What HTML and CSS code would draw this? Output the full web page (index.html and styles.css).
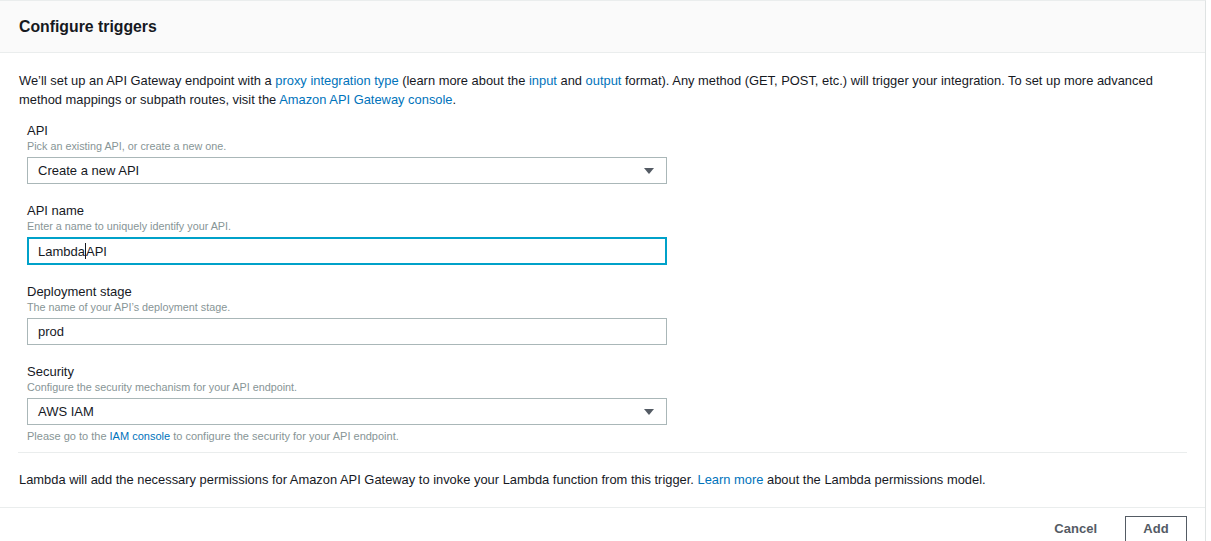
FILE: index.html
```html
<!DOCTYPE html>
<html lang="en">
<head>
<meta charset="utf-8">
<title>Configure triggers</title>
<link rel="stylesheet" href="styles.css">
</head>
<body>
<div class="card">
  <div class="card-header"><h2>Configure triggers</h2></div>
  <div class="card-body">
    <p class="intro">We’ll set up an API Gateway endpoint with a <a href="#">proxy integration type</a> (learn more about the <a href="#">input</a> and <a href="#">output</a> format). Any method (GET, POST, etc.) will trigger your integration. To set up more advanced method mappings or subpath routes, visit the <a href="#">Amazon API Gateway console</a>.</p>
    <div class="fields">
      <div class="field">
        <div class="label">API</div>
        <div class="desc">Pick an existing API, or create a new one.</div>
        <div class="control select"><span>Create a new API</span><span class="caret"></span></div>
      </div>
      <div class="field">
        <div class="label">API name</div>
        <div class="desc">Enter a name to uniquely identify your API.</div>
        <div class="control focus"><span>Lambda</span><span class="cursor"></span><span>API</span></div>
      </div>
      <div class="field">
        <div class="label">Deployment stage</div>
        <div class="desc">The name of your API’s deployment stage.</div>
        <div class="control"><span>prod</span></div>
      </div>
      <div class="field">
        <div class="label">Security</div>
        <div class="desc">Configure the security mechanism for your API endpoint.</div>
        <div class="control select"><span>AWS IAM</span><span class="caret"></span></div>
        <div class="help">Please go to the <a href="#">IAM console</a> to configure the security for your API endpoint.</div>
      </div>
    </div>
    <div class="perm">Lambda will add the necessary permissions for Amazon API Gateway to invoke your Lambda function from this trigger. <a href="#">Learn more</a> about the Lambda permissions model.</div>
  </div>
  <div class="card-footer">
    <button class="btn link">Cancel</button>
    <button class="btn outline">Add</button>
  </div>
</div>
</body>
</html>
```
FILE: styles.css
```css
* { box-sizing: border-box; }
html, body { margin: 0; padding: 0; }
body {
  background: #fff;
  font-family: "Liberation Sans", Arial, sans-serif;
  font-size: 13px;
  color: #16191f;
  overflow: hidden;
}
a { color: #0073bb; text-decoration: none; }
.card {
  width: 1206px;
  border-top: 1px solid #eaeded;
  border-right: 1px solid #dfe3e3;
  background: #fff;
}
.card-header {
  height: 52px;
  background: #fafafa;
  border-bottom: 1px solid #eaeded;
  display: flex;
  align-items: center;
  padding: 0 19px;
}
.card-header h2 {
  margin: 0;
  font-size: 15.8px;
  font-weight: bold;
  color: #16191f;
}
.card-body {
  padding: 18px 18px 0 18px;
}
.intro {
  margin: 0 0 0 1px;
  line-height: 19px;
  font-size: 12.9px;
}
.fields {
  padding: 14px 0 9px 9px;
  border-bottom: 1px solid #eaeded;
  display: flex;
  flex-direction: column;
  gap: 19px;
}
.label {
  font-size: 13px;
  line-height: 16px;
  color: #16191f;
}
.desc {
  font-size: 10.8px;
  line-height: 14px;
  color: #879596;
  margin-bottom: 4px;
}
.control {
  width: 640px;
  height: 27px;
  border: 1px solid #aab7b8;
  display: flex;
  align-items: center;
  padding: 0 10px;
  font-size: 13px;
  color: #16191f;
  background: #fff;
}
.control.focus {
  height: 28px;
  border: 2px solid #00a1c9;
  padding: 0 9px;
}
.cursor {
  display: inline-block;
  width: 1px;
  height: 16px;
  background: #16191f;
}
.select { justify-content: space-between; }
.caret {
  width: 0;
  height: 0;
  border-left: 5px solid transparent;
  border-right: 5px solid transparent;
  border-top: 6px solid #545b64;
  margin-right: 2px;
}
.help {
  margin-top: 4px;
  font-size: 11px;
  line-height: 14px;
  color: #879596;
}
.perm {
  padding: 18px 1px 18px 1px;
  line-height: 18px;
  font-size: 12.9px;
}
.card-footer {
  border-top: 1px solid #eaeded;
  display: flex;
  justify-content: flex-end;
  align-items: flex-start;
  padding: 8px 18px 0 0;
  gap: 28px;
  height: 40px;
}
.btn {
  font-family: "Liberation Sans", Arial, sans-serif;
  font-size: 13px;
  line-height: 18px;
  font-weight: bold;
  color: #545b64;
  background: #fff;
  cursor: pointer;
}
.btn.link {
  border: none;
  padding: 0;
  margin-top: 4px;
}
.btn.outline {
  border: 1px solid #545b64;
  width: 62px;
  padding: 3px 0 12px;
}
```
